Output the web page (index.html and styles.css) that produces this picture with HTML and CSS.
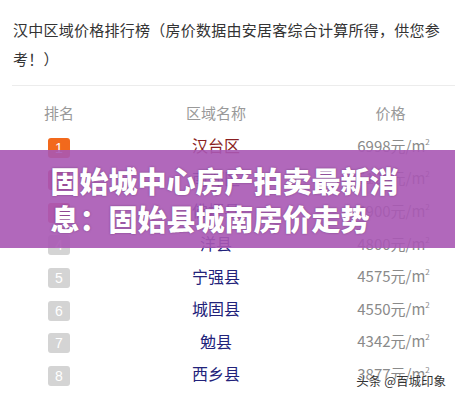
FILE: index.html
```html
<!DOCTYPE html>
<html lang="zh">
<head>
  <meta charset="UTF-8">
  <title>汉中区域价格排行榜</title>
  <link rel="stylesheet" href="styles.css">
</head>
<body>

  <div class="page">
    <p class="intro">汉中区域价格排行榜（房价数据由安居客综合计算所得，供您参考！）</p>
    <div class="divider"></div>

    <div class="rank-table">
      <div class="row head">
        <span>排名</span>
        <span>区域名称</span>
        <span>价格</span>
      </div>
      <div class="row">
        <span><i class="badge first">1</i></span>
        <span class="area top">汉台区</span>
        <span class="price">6998元/m<sup>2</sup></span>
      </div>
      <div class="row">
        <span><i class="badge second">2</i></span>
        <span class="area">南郑区</span>
        <span class="price">5125元/m<sup>2</sup></span>
      </div>
      <div class="row">
        <span><i class="badge third">3</i></span>
        <span class="area">佛坪县</span>
        <span class="price">4900元/m<sup>2</sup></span>
      </div>
      <div class="row">
        <span><i class="badge">4</i></span>
        <span class="area">洋县</span>
        <span class="price">4800元/m<sup>2</sup></span>
      </div>
      <div class="row">
        <span><i class="badge">5</i></span>
        <span class="area">宁强县</span>
        <span class="price">4575元/m<sup>2</sup></span>
      </div>
      <div class="row">
        <span><i class="badge">6</i></span>
        <span class="area">城固县</span>
        <span class="price">4550元/m<sup>2</sup></span>
      </div>
      <div class="row">
        <span><i class="badge">7</i></span>
        <span class="area">勉县</span>
        <span class="price">4342元/m<sup>2</sup></span>
      </div>
      <div class="row">
        <span><i class="badge">8</i></span>
        <span class="area">西乡县</span>
        <span class="price">3877元/m<sup>2</sup></span>
      </div>
    </div>

    <!-- title banner over the table -->
    <div class="banner">
      <h1>固始城中心房产拍卖最新消息：固始县城南房价走势</h1>
    </div>

    <div class="watermark">头条 @百城印象</div>
  </div>

</body>
</html>
```

FILE: styles.css
```css
body {
  margin: 0;
  padding: 0;
  background: #fff;
  font-family: "Noto Sans CJK SC", "Noto Sans", sans-serif;
}

.page {
  position: relative;
  width: 455px;
  height: 400px;
  overflow: hidden;
}

.intro {
  margin: 0;
  padding: 15px 10px 0 13px;
  font-size: 15px;
  line-height: 29px;
  letter-spacing: 0.25px;
  color: #333;
}

.divider {
  height: 1px;
  background: #ececec;
  margin: 12px 0 0 12px;
}

.rank-table {
  margin-top: 10px;
  padding-left: 12px;
}

.row {
  display: grid;
  grid-template-columns: 94px 220px 129px;
  height: 32.6px;
  align-items: center;
  text-align: center;
}

.row.head {
  font-size: 15px;
  color: #999;
  height: 33px;
}

.badge {
  display: inline-flex;
  justify-content: center;
  align-items: center;
  width: 22px;
  height: 20px;
  border-radius: 3px;
  background: #d4d4d4;
  color: #fff;
  font-style: normal;
  font-size: 14px;
  font-family: "Liberation Sans", sans-serif;
  vertical-align: middle;
}

.badge.first {
  background: #f2691c;
}

.badge.second {
  background: #e2404f;
}

.badge.third {
  background: #e65a66;
}

.area {
  font-size: 16px;
  color: #22227a;
}

.area.top {
  color: #8a1f22;
}

.price {
  font-size: 15px;
  color: #8a8a8a;
  padding-left: 6px;
}

.price sup {
  font-size: 8px;
  vertical-align: 7px;
  line-height: 0;
}

.banner {
  position: absolute;
  left: 0;
  right: 0;
  top: 150px;
  height: 98px;
  background: rgba(168, 88, 180, 0.9);
  display: flex;
  justify-content: center;
  align-items: center;
}

.banner h1 {
  margin: 0;
  width: 356px;
  padding-left: 2px;
  font-size: 29px;
  line-height: 38px;
  font-weight: 900;
  color: #fff;
  text-shadow: 0 0 2px rgba(60, 20, 70, 0.5);
}

.watermark {
  position: absolute;
  right: 9px;
  bottom: 10px;
  font-size: 12.5px;
  color: #333;
  text-shadow: 0 0 2px #fff, 0 0 2px #fff;
}
```
